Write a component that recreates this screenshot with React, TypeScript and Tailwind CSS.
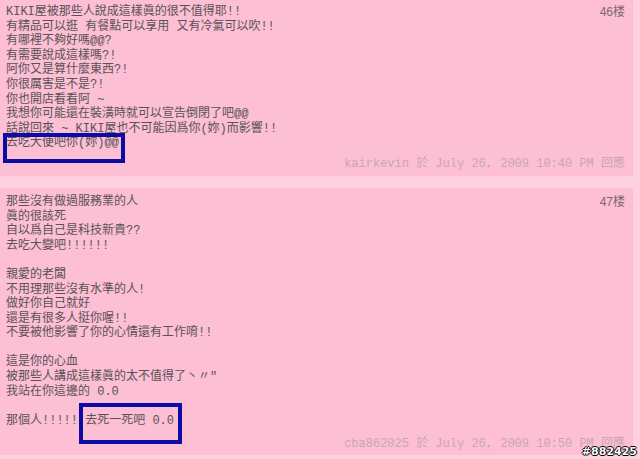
import React from 'react'

const post1 = [
  'KIKI屋被那些人說成這樣眞的很不值得耶!!',
  '有精品可以逛 有餐點可以享用 又有冷氣可以吹!!',
  '有哪裡不夠好嗎@@?',
  '有需要說成這樣嗎?!',
  '阿你又是算什麼東西?!',
  '你很厲害是不是?!',
  '你也開店看看阿 ~',
  '我想你可能還在裝潢時就可以宣告倒閉了吧@@',
  '話說回來 ~ KIKI屋也不可能因爲你(妳)而影響!!',
  '去吃大便吧你(妳)@@',
]

const post2 = [
  '那些沒有做過服務業的人',
  '眞的很該死',
  '自以爲自己是科技新貴??',
  '去吃大變吧!!!!!!',
  '',
  '親愛的老闆',
  '不用理那些沒有水準的人!',
  '做好你自己就好',
  '還是有很多人挺你喔!!',
  '不要被他影響了你的心情還有工作唷!!',
  '',
  '這是你的心血',
  '被那些人講成這樣眞的太不值得了丶〃"',
  '我站在你這邊的 0.0',
  '',
  '那個人!!!!! 去死一死吧 0.0',
]

const textFont = "font-['Liberation_Mono','Noto_Sans_CJK_TC',monospace]"

const Post: React.FC<{ floor: string; lines: string[]; footer: string; box: string; pad: string; gap: string }> = ({ floor, lines, footer, box, pad, gap }) => (
  <div className={`relative bg-[#fcbfd3] mr-[7px] px-[6px] ${pad}`}>
    <div className="flex justify-between">
      <div className={`${textFont} text-[12px] leading-[14.6px] text-[#5a5258] whitespace-pre`}>
        {lines.map((l, i) => (
          <div key={i} className="h-[14.6px]">{l}</div>
        ))}
      </div>
      <div className="font-['Liberation_Sans','Noto_Sans_CJK_SC',sans-serif] text-[12px] leading-[14.6px] text-[#7d6870] pr-[2px]">{floor}</div>
    </div>
    <div className={`${textFont} text-[12px] leading-[14px] text-[#c9a6b4] text-right pr-[2px] ${gap}`}>{footer}</div>
    <div className={`absolute border-[4px] border-[#0b0ba6] ${box}`} />
  </div>
)

export default function App() {
  return (
    <div className="relative w-[640px] h-[459px] bg-[#fdd2de] overflow-hidden">
      <Post
        floor="46楼"
        lines={post1}
        footer="kairkevin 於 July 26, 2009 10:40 PM 回應"
        pad="pt-[5px] pb-[5px]"
        gap="mt-[6px]"
        box="left-[3px] top-[133px] w-[122px] h-[30px]"
      />
      <div className="h-[12px]" />
      <Post
        floor="47楼"
        lines={post2}
        footer="cba862025 於 July 26, 2009 10:50 PM 回應"
        pad="pt-[7px] pb-[4px]"
        gap="mt-[9px]"
        box="left-[79px] top-[215px] w-[103px] h-[41px]"
      />
      <div className="absolute right-[3px] bottom-[-1px] font-['DejaVu_Sans',sans-serif] font-bold text-[11px] text-white [text-shadow:-1px_0_#000,1px_0_#000,0_-1px_#000,0_1px_#000]">#882425</div>
    </div>
  )
}
